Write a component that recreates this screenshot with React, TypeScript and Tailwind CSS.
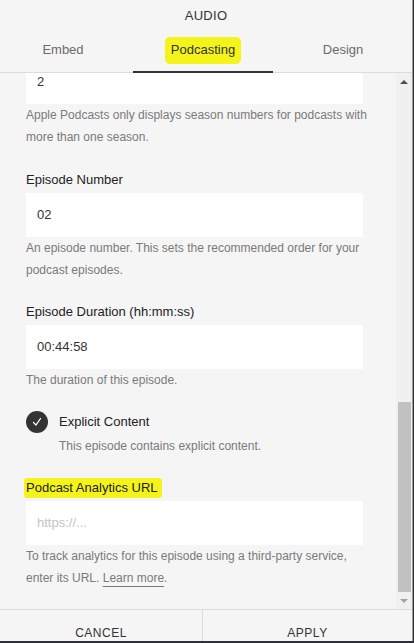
import type { ReactNode } from "react";

const font = { fontFamily: '"Liberation Sans", Arial, sans-serif' };

function Field({
  label,
  value,
  placeholder,
  help,
  highlight = false,
}: {
  label?: string;
  value?: string;
  placeholder?: string;
  help: ReactNode;
  highlight?: boolean;
}) {
  return (
    <div className="flex flex-col">
      {label && (
        <div className="h-[20px] mb-[3px] flex items-center">
          <span
            className={`text-[13px] leading-[20px] text-[#222] ${
              highlight ? "bg-[#f4f41a] -ml-[2px] pl-[2px] pr-[4px] rounded-[3px]" : ""
            }`}
          >
            {label}
          </span>
        </div>
      )}
      <div className="h-[44px] bg-white flex items-center px-[11px] text-[13px]">
        {value ? (
          <span className="text-[#333]">{value}</span>
        ) : (
          <span className="text-[#c4c4c4]">{placeholder}</span>
        )}
      </div>
      <p className="text-[12px] leading-[22px] text-[#7a7a7a] -mr-[12px] whitespace-nowrap">{help}</p>
    </div>
  );
}

export default function App() {
  return (
    <div className="w-[414px] h-[643px] bg-[#2d3038]" style={font}>
      <div className="w-[413px] h-[641px] bg-[#f5f5f5] border-r border-[#9a9a9a] overflow-hidden flex flex-col">
        {/* header */}
        <div className="h-[73px] shrink-0 border-b border-[#dcdcdc] flex flex-col">
          <div className="h-[32px] flex items-center justify-center text-[13px] tracking-[0.3px] text-[#333]">
            AUDIO
          </div>
          <div className="flex w-[420px] -ml-[7px] h-[40px]">
            {["Embed", "Podcasting", "Design"].map((tab) => {
              const active = tab === "Podcasting";
              return (
                <div
                  key={tab}
                  className={`w-[140px] flex justify-center pt-[10px] text-[13px] leading-[16px] -mb-px ${
                    active ? "border-b-2 border-[#333] text-[#333]" : "text-[#6b6b6b]"
                  }`}
                >
                  <span
                    className={
                      active ? "bg-[#f4f41a] px-[6px] -mt-[5px] pt-[5px] pb-[6px] h-fit rounded-[5px]" : ""
                    }
                  >
                    {tab}
                  </span>
                </div>
              );
            })}
          </div>
        </div>

        {/* body */}
        <div className="h-[536px] shrink-0 flex overflow-hidden">
          <div className="flex-1 overflow-hidden pl-[26px] pr-[33px]">
            <div className="-mt-[13px] flex flex-col">
              <Field
                value="2"
                help={
                  <>
                    Apple Podcasts only displays season numbers for podcasts with
                    <br />
                    more than one season.
                  </>
                }
              />
              <div className="h-[22px]" />
              <Field
                label="Episode Number"
                value="02"
                help={
                  <>
                    An episode number. This sets the recommended order for your
                    <br />
                    podcast episodes.
                  </>
                }
              />
              <div className="h-[21px]" />
              <Field
                label="Episode Duration (hh:mm:ss)"
                value="00:44:58"
                help="The duration of this episode."
              />
              <div className="h-[21px]" />
              <div className="flex gap-[11px]">
                <div className="w-[22px] h-[22px] rounded-full bg-[#333] flex items-center justify-center mt-[-1px]">
                  <svg width="12" height="12" viewBox="0 0 12 12" fill="none">
                    <path
                      d="M2.5 6.5 L5 9 L9.5 2.5"
                      stroke="white"
                      strokeWidth="1.3"
                      strokeLinecap="round"
                      strokeLinejoin="round"
                    />
                  </svg>
                </div>
                <div className="flex flex-col">
                  <span className="text-[13px] leading-[20px] text-[#222]">Explicit Content</span>
                  <span className="text-[12px] leading-[28px] text-[#7a7a7a]">
                    This episode contains explicit content.
                  </span>
                </div>
              </div>
              <div className="h-[18px]" />
              <Field
                label="Podcast Analytics URL"
                placeholder="https://..."
                highlight
                help={
                  <>
                    To track analytics for this episode using a third-party service,
                    <br />
                    enter its URL. <a className="underline underline-offset-[4px] decoration-[#777]">Learn more</a>.
                  </>
                }
              />
            </div>
          </div>

          {/* scrollbar */}
          <div className="w-[16px] shrink-0 bg-[#f0f0f0] relative">
            <div className="absolute left-[4px] top-[7px] w-0 h-0 border-l-[4px] border-r-[4px] border-b-[4px] border-l-transparent border-r-transparent border-b-[#505050]" />
            <div className="absolute left-[2px] top-[329px] w-[13px] h-[190px] bg-[#c1c1c1]" />
            <div className="absolute left-[4px] top-[526px] w-0 h-0 border-l-[4px] border-r-[4px] border-t-[4px] border-l-transparent border-r-transparent border-t-[#a3a3a3]" />
          </div>
        </div>

        {/* footer */}
        <div className="h-[44px] shrink-0 border-t border-[#dcdcdc] flex text-[12px] tracking-[0.5px] text-[#333]">
          <div className="w-[203px] border-r border-[#dcdcdc] flex justify-center pt-[14px]">CANCEL</div>
          <div className="flex-1 flex justify-center pt-[14px]">APPLY</div>
        </div>
      </div>
    </div>
  );
}
